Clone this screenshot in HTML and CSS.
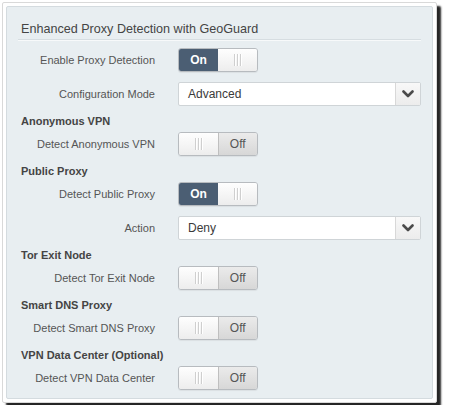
FILE: index.html
```html
<!DOCTYPE html>
<html>
<head>
<meta charset="utf-8">
<link rel="stylesheet" href="styles.css">
</head>
<body>
<div class="card">
  <div class="panel">
    <h2 class="title">Enhanced Proxy Detection with GeoGuard</h2>

    <div class="row row-first">
      <span class="label">Enable Proxy Detection</span>
      <div class="toggle"><span class="seg seg-on">On</span><span class="seg seg-grip"><i></i><i></i><i></i></span></div>
    </div>
    <div class="row">
      <span class="label">Configuration Mode</span>
      <div class="select"><span class="value">Advanced</span><span class="arrow"><svg width="12" height="8" viewBox="0 0 12 8"><polyline points="1.5,1.5 6,6 10.5,1.5" fill="none" stroke="#4a4a4a" stroke-width="2.6" stroke-linecap="round" stroke-linejoin="round"/></svg></span></div>
    </div>

    <div class="group-title">Anonymous VPN</div>
    <div class="row row-tight">
      <span class="label">Detect Anonymous VPN</span>
      <div class="toggle"><span class="seg seg-grip"><i></i><i></i><i></i></span><span class="seg seg-off">Off</span></div>
    </div>

    <div class="group-title">Public Proxy</div>
    <div class="row row-tight">
      <span class="label">Detect Public Proxy</span>
      <div class="toggle"><span class="seg seg-on">On</span><span class="seg seg-grip"><i></i><i></i><i></i></span></div>
    </div>
    <div class="row">
      <span class="label">Action</span>
      <div class="select"><span class="value">Deny</span><span class="arrow"><svg width="12" height="8" viewBox="0 0 12 8"><polyline points="1.5,1.5 6,6 10.5,1.5" fill="none" stroke="#4a4a4a" stroke-width="2.6" stroke-linecap="round" stroke-linejoin="round"/></svg></span></div>
    </div>

    <div class="group-title">Tor Exit Node</div>
    <div class="row row-tight">
      <span class="label">Detect Tor Exit Node</span>
      <div class="toggle"><span class="seg seg-grip"><i></i><i></i><i></i></span><span class="seg seg-off">Off</span></div>
    </div>

    <div class="group-title">Smart DNS Proxy</div>
    <div class="row row-tight">
      <span class="label">Detect Smart DNS Proxy</span>
      <div class="toggle"><span class="seg seg-grip"><i></i><i></i><i></i></span><span class="seg seg-off">Off</span></div>
    </div>

    <div class="group-title">VPN Data Center (Optional)</div>
    <div class="row row-tight">
      <span class="label">Detect VPN Data Center</span>
      <div class="toggle"><span class="seg seg-grip"><i></i><i></i><i></i></span><span class="seg seg-off">Off</span></div>
    </div>
  </div>
</div>
</body>
</html>
```

FILE: styles.css
```css
html, body {
  margin: 0;
  background: #fff;
}
body {
  font-family: "Liberation Sans", Arial, Helvetica, sans-serif;
}
.card {
  margin: 2px;
  width: 427px;
  padding: 3px;
  background: #fff;
  border: 1px solid #d9d9d9;
  border-radius: 2px;
  box-shadow: 4px 4px 2px rgba(0, 0, 0, 0.85);
}
.panel {
  background: #e8eef1;
  border: 1px solid #d4dbdf;
  border-radius: 2px;
  padding: 0 11px 8px;
}
.title {
  margin: 0;
  padding: 12px 3px 0;
  font-size: 12.6px;
  font-weight: normal;
  color: #444;
  line-height: 20px;
  border-bottom: 1px solid #d6dde1;
  box-shadow: 0 1px 0 #f7f9fa;
}
.row {
  display: grid;
  grid-template-columns: 137px 1fr;
  column-gap: 23px;
  align-items: center;
  margin-top: 10px;
}
.row-first {
  margin-top: 8px;
}
.row-tight {
  margin-top: 0;
}
.label {
  text-align: right;
  font-size: 11px;
  color: #555;
}
.group-title {
  margin: 7px 0 3px;
  padding-left: 3px;
  font-size: 11px;
  font-weight: bold;
  color: #444;
  line-height: 16px;
}
.toggle {
  display: flex;
  width: 80px;
  height: 24px;
  box-sizing: border-box;
  border: 1px solid #b7bbbf;
  border-radius: 3px;
  overflow: hidden;
  box-shadow: 0 1px 1px rgba(0, 0, 0, 0.06);
}
.seg {
  flex: 1;
  display: flex;
  align-items: center;
  justify-content: center;
  font-size: 12px;
}
.seg-on {
  background: #4b5e73;
  color: #fff;
  font-weight: bold;
}
.seg-grip {
  background: linear-gradient(#fefefe, #ededed);
  gap: 2px;
}
.seg-grip i {
  display: block;
  width: 1px;
  height: 12px;
  background: #cfcfcf;
  box-shadow: 1px 0 0 #fff;
}
.seg-off {
  background: linear-gradient(#ebebeb, #d7d7d7);
  color: #555;
  border-left: 1px solid #bfbfbf;
}
.select {
  display: flex;
  height: 24px;
  box-sizing: border-box;
  border: 1px solid #cfd4d7;
  border-radius: 2px;
  background: #fff;
}
.value {
  flex: 1;
  padding-left: 9px;
  font-size: 12px;
  color: #3a3a3a;
  line-height: 22px;
}
.arrow {
  width: 24px;
  border-left: 1px solid #d8d8d8;
  background: linear-gradient(#f8f8f8, #ececec);
  display: flex;
  align-items: center;
  justify-content: center;
}
```
